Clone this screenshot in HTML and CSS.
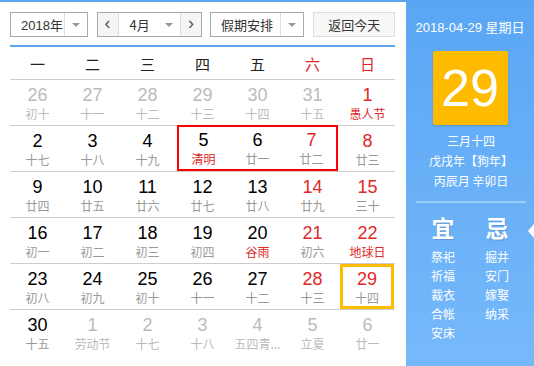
FILE: index.html
```html
<!DOCTYPE html>
<html lang="zh-CN">
<head>
  <meta charset="UTF-8">
  <title>万年历</title>
  <link rel="stylesheet" href="styles.css">
</head>
<body>

<div class="calendar">
  <div class="main">
    <div class="toolbar">
      <div class="select year">
        <span class="select-text">2018年</span>
        <span class="select-arrow"></span>
      </div>
      <div class="select month">
        <span class="step">&lsaquo;</span>
        <span class="select-text">4月</span>
        <span class="select-arrow plain"></span>
        <span class="step">&rsaquo;</span>
      </div>
      <div class="select holiday">
        <span class="select-text">假期安排</span>
        <span class="select-arrow"></span>
      </div>
      <button class="today-btn">返回今天</button>
    </div>

    <div class="week">
      <span>一</span><span>二</span><span>三</span><span>四</span><span>五</span>
      <span class="weekend">六</span><span class="weekend">日</span>
    </div>

    <div class="days">
      <div class="row">
        <div class="day other"><b>26</b><i>初十</i></div>
        <div class="day other"><b>27</b><i>十一</i></div>
        <div class="day other"><b>28</b><i>十二</i></div>
        <div class="day other"><b>29</b><i>十三</i></div>
        <div class="day other"><b>30</b><i>十四</i></div>
        <div class="day other"><b>31</b><i>十五</i></div>
        <div class="day weekend"><b>1</b><i class="fest">愚人节</i></div>
      </div>
      <div class="row">
        <div class="day"><b>2</b><i>十七</i></div>
        <div class="day"><b>3</b><i>十八</i></div>
        <div class="day"><b>4</b><i>十九</i></div>
        <div class="day hol hol-start"><b>5</b><i class="fest">清明</i></div>
        <div class="day hol"><b>6</b><i>廿一</i></div>
        <div class="day weekend hol hol-end"><b>7</b><i>廿二</i></div>
        <div class="day weekend"><b>8</b><i>廿三</i></div>
      </div>
      <div class="row">
        <div class="day"><b>9</b><i>廿四</i></div>
        <div class="day"><b>10</b><i>廿五</i></div>
        <div class="day"><b>11</b><i>廿六</i></div>
        <div class="day"><b>12</b><i>廿七</i></div>
        <div class="day"><b>13</b><i>廿八</i></div>
        <div class="day weekend"><b>14</b><i>廿九</i></div>
        <div class="day weekend"><b>15</b><i>三十</i></div>
      </div>
      <div class="row">
        <div class="day"><b>16</b><i>初一</i></div>
        <div class="day"><b>17</b><i>初二</i></div>
        <div class="day"><b>18</b><i>初三</i></div>
        <div class="day"><b>19</b><i>初四</i></div>
        <div class="day"><b>20</b><i class="fest">谷雨</i></div>
        <div class="day weekend"><b>21</b><i>初六</i></div>
        <div class="day weekend"><b>22</b><i class="fest">地球日</i></div>
      </div>
      <div class="row">
        <div class="day"><b>23</b><i>初八</i></div>
        <div class="day"><b>24</b><i>初九</i></div>
        <div class="day"><b>25</b><i>初十</i></div>
        <div class="day"><b>26</b><i>十一</i></div>
        <div class="day"><b>27</b><i>十二</i></div>
        <div class="day weekend"><b>28</b><i>十三</i></div>
        <div class="day weekend selected"><b>29</b><i>十四</i></div>
      </div>
      <div class="row">
        <div class="day"><b>30</b><i>十五</i></div>
        <div class="day other"><b>1</b><i>劳动节</i></div>
        <div class="day other"><b>2</b><i>十七</i></div>
        <div class="day other"><b>3</b><i>十八</i></div>
        <div class="day other"><b>4</b><i>五四青...</i></div>
        <div class="day other"><b>5</b><i>立夏</i></div>
        <div class="day other"><b>6</b><i>廿一</i></div>
      </div>
    </div>
  </div>

  <div class="side">
    <div class="side-date">2018-04-29 星期日</div>
    <div class="big-day">29</div>
    <div class="lunar">
      <p>三月十四</p>
      <p>戊戌年【狗年】</p>
      <p>丙辰月 辛卯日</p>
    </div>
    <div class="almanac">
      <div class="col">
        <h4>宜</h4>
        <p>祭祀</p><p>祈福</p><p>裁衣</p><p>合帐</p><p>安床</p>
      </div>
      <div class="col">
        <h4>忌</h4>
        <p>掘井</p><p>安门</p><p>嫁娶</p><p>纳采</p>
      </div>
    </div>
    <span class="pointer"></span>
  </div>
</div>

</body>
</html>
```

FILE: styles.css
```css
body {
  margin: 0;
  background-color: white;
  font-family: "Liberation Sans", "Noto Sans CJK SC", sans-serif;
}

.calendar {
  display: flex;
  width: 534px;
  height: 366px;
  overflow: hidden;
}

.main {
  width: 385px;
  padding: 0 11px 0 10px;
  border-top: 2px solid #5ea4ee;
}

.toolbar {
  display: flex;
  align-items: center;
  height: 45px;
  padding-top: 1px;
  box-sizing: border-box;
  border-bottom: 2px solid #5ea4ee;
  font-family: "Noto Sans CJK SC", sans-serif;
  font-size: 13px;
  color: #333;
}

.select {
  display: flex;
  height: 25px;
  box-sizing: border-box;
  border: 1px solid #a9a9a9;
  background-color: white;
  margin-right: 8px;
}

.select-text {
  display: flex;
  align-items: center;
  padding-left: 10px;
  flex: 1;
}

.select-arrow {
  width: 22px;
  border-left: 1px solid #ddd;
  position: relative;
}

.select-arrow::after {
  content: "";
  position: absolute;
  left: 7px;
  top: 10px;
  border: 4px solid transparent;
  border-top: 4px solid #999;
}

.select-arrow.plain {
  border-left: none;
}

.year { width: 78px; }
.year .select-text { font-family: "Liberation Sans", "Noto Sans CJK SC", sans-serif; }
.month { width: 106px; margin-left: 1px; }
.month .select-text { padding-left: 11px; }
.holiday { width: 95px; }

.step {
  display: flex;
  align-items: center;
  justify-content: center;
  width: 21px;
  background-color: #f5f5f5;
  border-right: 1px solid #ddd;
  font-family: "Liberation Sans", sans-serif;
  font-size: 18px;
  color: #555;
  padding-bottom: 2px;
  box-sizing: border-box;
}

.step:last-child {
  border-right: none;
  border-left: 1px solid #ddd;
}

.today-btn {
  margin-left: 1px;
  width: 82px;
  height: 25px;
  border: 1px solid #ddd;
  background-color: #f7f7f7;
  font-family: "Noto Sans CJK SC", sans-serif;
  font-size: 13px;
  color: #333;
  padding: 0;
}

.week {
  display: grid;
  grid-template-columns: repeat(7, 55px);
  height: 32px;
  align-items: center;
  border-bottom: 1px solid #ccc;
  font-family: "Noto Sans CJK SC", sans-serif;
  font-size: 15px;
  color: #222;
  text-align: center;
}

.week .weekend { color: #e02828; }

.row {
  display: grid;
  grid-template-columns: repeat(7, 55px);
  height: 46px;
  box-sizing: border-box;
  border-bottom: 1px solid #ccc;
}

.row:last-child { border-bottom: none; }

.day {
  display: flex;
  flex-direction: column;
  align-items: center;
  padding-top: 5px;
  box-sizing: border-box;
}

.day b {
  font-weight: normal;
  font-size: 18px;
  line-height: 20px;
  color: #000;
}

.day i {
  font-style: normal;
  font-family: "Noto Sans CJK SC", sans-serif;
  font-size: 12px;
  line-height: 16px;
  margin-top: 1px;
  color: #999;
  white-space: nowrap;
}

.day.weekend b { color: #e02828; }
.day i.fest { color: #e02828; }
.day.other b { color: #bbb; }
.day.other i { color: #bbb; }
.day.other.weekend b, .day.other i.fest { color: #e02828; }

.hol {
  margin-top: -1px;
  box-shadow: inset 0 2px #f00, inset 0 -2px #f00;
}

.hol-start {
  margin-left: 2px;
  box-shadow: inset 0 2px #f00, inset 0 -2px #f00, inset 2px 0 #f00;
}

.hol-end {
  margin-right: 2px;
  box-shadow: inset 0 2px #f00, inset 0 -2px #f00, inset -2px 0 #f00;
}

.selected {
  outline: 3px solid #ffbb00;
  outline-offset: -3px;
  margin-right: 1px;
}

.side {
  position: relative;
  width: 128px;
  background: linear-gradient(#5aa6f4, #76b9fb);
  color: white;
  font-family: "Noto Sans CJK SC", sans-serif;
  text-align: center;
}

.side-date {
  font-family: "Liberation Sans", "Noto Sans CJK SC", sans-serif;
  font-size: 13px;
  margin-top: 17px;
}

.big-day {
  width: 75px;
  height: 74px;
  margin: 15px auto 0;
  background-color: #ffbb00;
  border-radius: 2px;
  font-family: "Liberation Sans", sans-serif;
  font-size: 52px;
  line-height: 74px;
  box-shadow: 0 1px 2px rgba(0, 0, 0, 0.15);
}

.lunar {
  margin: 6px 0 0;
  font-size: 12px;
  line-height: 20px;
  padding-bottom: 10px;
  border-bottom: 2px solid rgba(255, 255, 255, 0.35);
  margin-left: 10px;
  margin-right: 8px;
}

.lunar p { margin: 0; }

.almanac {
  display: flex;
  justify-content: center;
  gap: 30px;
  margin-top: 10px;
}

.almanac h4 {
  margin: 0 0 6px;
  font-size: 23px;
  line-height: 28px;
  font-weight: bold;
  text-shadow: 1px 1px 1px rgba(0, 0, 0, 0.15);
}

.almanac p {
  margin: 0;
  font-size: 12px;
  line-height: 19px;
}

.pointer {
  position: absolute;
  right: 0;
  top: 224px;
  border: 7px solid transparent;
  border-right: 6px solid white;
  border-left: 0;
}
```
